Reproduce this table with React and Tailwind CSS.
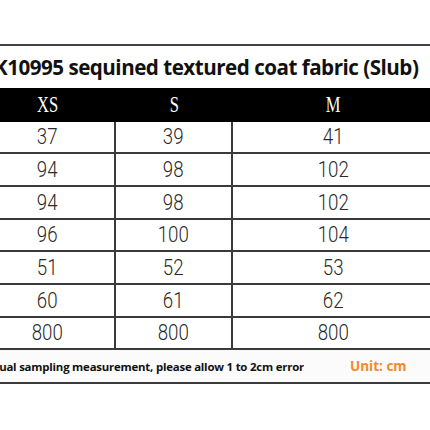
export default function App() {
  const rows = [
    ["37", "39", "41"],
    ["94", "98", "102"],
    ["94", "98", "102"],
    ["96", "100", "104"],
    ["51", "52", "53"],
    ["60", "61", "62"],
    ["800", "800", "800"],
  ];
  const cols = ["w-[136px]", "w-[117px]", "w-[200px]"];
  const heads = ["XS", "S", "M"];
  return (
    <div className="w-[430px] h-[430px] overflow-hidden bg-white">
      <div className="ml-[-20px] w-[453px] pt-[44px]">
        <div className="h-[2px] bg-[#444]" />
        <div
          className="h-[42px] flex items-center pl-[14px] text-[20.6px] font-bold text-[#111] whitespace-nowrap tracking-[-0.5px]"
          style={{ fontFamily: "'Open Sans', 'Noto Sans', sans-serif" }}
        >
          K10995 sequined textured coat fabric (Slub)
        </div>
        <div className="h-[33.5px] bg-black flex">
          {heads.map((h, i) => (
            <div key={i} className={`${cols[i]} flex items-center justify-center`}>
              <span
                className="text-white text-[23px] inline-block scale-x-[0.72]"
                style={{ fontFamily: "'Liberation Serif', serif" }}
              >
                {h}
              </span>
            </div>
          ))}
        </div>
        {rows.map((r, ri) => (
          <div key={ri} className="h-[32.7px] flex border-b-2 border-[#3a3a3a]">
            {r.map((v, ci) => (
              <div
                key={ci}
                className={`${cols[ci]} flex items-center justify-center ${ci < 2 ? "border-r-2 border-[#3a3a3a]" : ""}`}
              >
                <span
                  className="text-[#2a2a2a] text-[22px] font-light inline-block scale-x-[0.85]"
                  style={{ fontFamily: "Roboto, 'DejaVu Sans', sans-serif" }}
                >
                  {v}
                </span>
              </div>
            ))}
          </div>
        ))}
        <div
          className="h-[34px] flex items-center bg-[#fbfbfb] border-b-2 border-[#3a3a3a] whitespace-nowrap"
          style={{ fontFamily: "'Open Sans', 'Noto Sans', sans-serif" }}
        >
          <div className="w-[324px] shrink-0 flex justify-end overflow-hidden">
            <span className="text-[11.4px] font-bold text-[#111] tracking-[-0.2px]">
              Actual sampling measurement, please allow 1 to 2cm error
            </span>
          </div>
          <span className="text-[13.5px] font-bold text-[#f38a2a] ml-[46px]">Unit: cm</span>
        </div>
      </div>
    </div>
  );
}
